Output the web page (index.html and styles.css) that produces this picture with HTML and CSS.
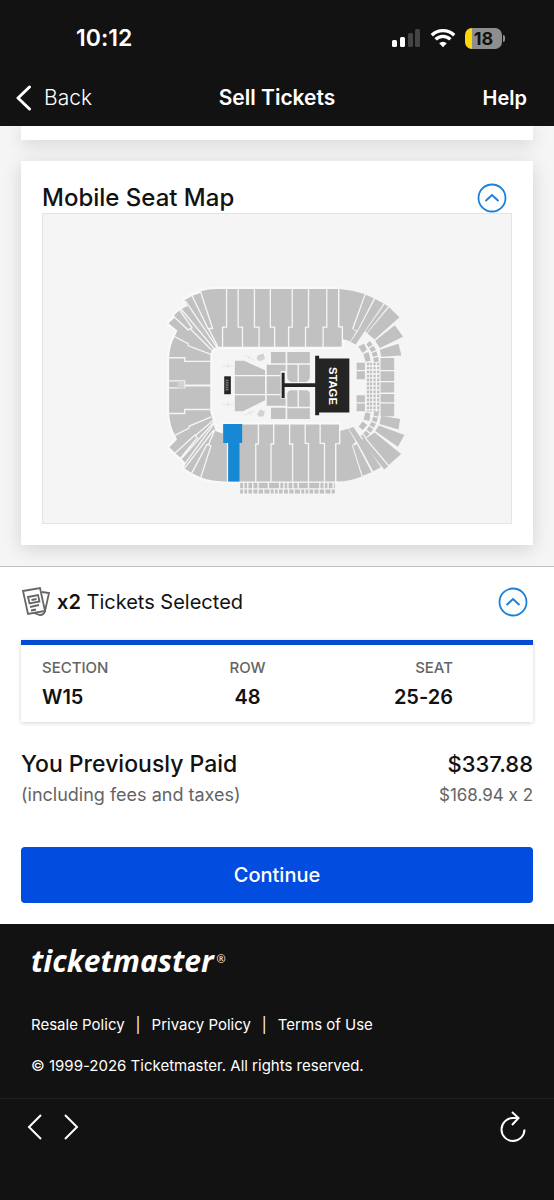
FILE: index.html
```html
<!DOCTYPE html>
<html lang="en">
<head>
    <meta charset="utf-8">
    <meta name="viewport" content="width=device-width, initial-scale=1">
    <title>Sell Tickets</title>
    <link rel="stylesheet" href="styles.css">
</head>
<body>
    <header class="top">
        <div class="status-bar">
            <span class="time">10:12</span>
            <div class="status-icons">
                <svg width="29" height="20" viewBox="0 0 29 20">
                    <rect x="0" y="12" width="5" height="7" rx="1.5" fill="#fff"/>
                    <rect x="8" y="9" width="5" height="10" rx="1.5" fill="#fff"/>
                    <rect x="16" y="5" width="5" height="14" rx="1.5" fill="#444"/>
                    <rect x="23" y="1" width="5" height="18" rx="1.5" fill="#444"/>
                </svg>
                <svg width="26" height="20" viewBox="0 0 26 20" fill="none" stroke="#fff" stroke-width="3.4">
                    <path d="M1.800 7.200a16 16 0 0 1 22.400 0"/>
                    <path d="M5.600 11.400a10.500 10.500 0 0 1 14.800 0"/>
                    <path d="M13 19.200l-3.800-3.900a5.500 5.500 0 0 1 7.600 0z" fill="#fff" stroke="none"/>
                </svg>
                <div class="battery"><span>18</span></div>
            </div>
        </div>
        <nav class="nav-bar">
            <button class="nav-button back">
                <svg width="16" height="26" viewBox="0 0 16 26" fill="none" stroke="#fff" stroke-width="3" stroke-linecap="round" stroke-linejoin="round">
                    <path d="M13.500 2L2 13l11.500 11"/>
                </svg>
                Back
            </button>
            <h1 class="nav-title">Sell Tickets</h1>
            <button class="nav-button help">Help</button>
        </nav>
    </header>

    <main class="content">
        <div class="card card-end"></div>
        <section class="card map-card">
            <div class="map-header">
                <h2>Mobile Seat Map</h2>
                <button class="toggle" aria-label="Collapse seat map">
                    <svg width="30" height="30" viewBox="0 0 30 30" fill="none" stroke="#1a80dc">
                        <circle cx="15" cy="15" r="13.500" stroke-width="1.800"/>
                        <path d="M8.500 18l6.500-6 6.500 6" stroke-width="2"/>
                    </svg>
                </button>
            </div>
            <div class="seat-map">
                <svg viewBox="-324 -186 1410 930">
                    <!-- west side and the two long stands -->
                    <path class="seats halo" d="M565 40H200Q175 40 152 47L150 52 126 60 102 74 112 92 104 94 91 102 73 117 71 128 54 143 81 165 73 183Q58 210 56 245V415Q58 450 73 480L80 493 57 517 75 535 90 548 106 565 101 580 124 594 150 607Q185 620 232 620H556V505H568V448H218V475L195 468Q190 440 180 410V240Q182 216 205 214H576V156H565Z"/>
                    <g class="aisles">
                        <path d="M229 38V155H217V216M264 38V155H277V216M313 38V155H327V216M361 38V155H374V216M427 38V155H416V216M476 38V155H467V216M531 38V155H520V216"/>
                        <path d="M150 46L187 159H173L124 58M175 160L204 216M105 76L200 216M90 98L192 220M70 123L113 163 125 157 88 104M121 161L184 224M72 183L113 205 114 211 182 237M54 247H103V258H182M54 317H103V330H182"/>
                        <path d="M54 415H103V403H182M54 338H103V332H182M73 481L115 460 117 453 183 425M72 536L134 480 141 488 90 550M137 480L190 435M92 552L192 440M104 566L192 445M101 582L191 464M123 597L170 508 182 513 151 609M175 508L193 466"/>
                        <path d="M325 446V507H317V622M371 446V507H363V622M419 446V507H428V622M466 446V505H476V622M511 446V505H524V622M232 500V622"/>
                    </g>
                    <rect class="light-seats" x="82" y="319" width="20" height="20"/>

                    <!-- selected section -->
                    <path class="selected" d="M219 447H276V504H268V620H234V504H219Z"/>

                    <!-- north east corner -->
                    <g class="seats" transform="translate(390 0)">
                        <path d="M179 40Q218 43 255 55L217 160 230 167 212 198Q200 192 190 191V152H179Z"/>
                        <path d="M258 57L283 68 233 165 221 161Z"/>
                        <path d="M287 70L312 84 228 207 213 200 236 165Z"/>
                        <path d="M315 86L326 92 262 172 257 168Z"/>
                        <path d="M329 95L360 125 285 192 263 173Z"/>
                        <path d="M346 149L371 184 301 218 287 196Z"/>
                        <path d="M357 205L366 240 305 244 301 223Z"/>
                        <path d="M303 248H344V284H303ZM303 288H344V317H303ZM303 321H344V352H303Z"/>
                        <path d="M236 213L253 205 262 222 249 233ZM251 236L268 229 273 256 258 259ZM231 262H256V284H231ZM231 288H256V312H231Z"/>
                    </g>
                    <!-- south east corner -->
                    <g class="seats" transform="translate(390 330)">
                        <path d="M170 290V178H182V137Q194 135 205 131L228 170 217 182 246 275Q210 290 170 290Z"/>
                        <path d="M220 182L232 178 276 262 249 273Z"/>
                        <path d="M207 131L221 126 304 247 281 259 236 176Z"/>
                        <path d="M244 166L255 160 326 244 314 254Z"/>
                        <path d="M285 142L365 207 328 240 260 160Z"/>
                        <path d="M298 121L375 150 355 185 287 138Z"/>
                        <path d="M305 92L362 102 357 133 300 117Z"/>
                        <path d="M303 26H344V51H303ZM303 55H344V93H303ZM231 30H256V51H231ZM231 55H256V78H231Z"/>
                        <path d="M257 82L272 84 270 108 252 104ZM249 109L263 120 249 135 237 124Z"/>
                    </g>
                    <g class="rows">
                        <path d="M655 262V410M664 262V410M675 262V410M686 262V410" stroke-width="7" stroke-dasharray="8 4"/>
                        <path d="M655 202Q676 222 681 262M681 410Q676 455 638 488" stroke-width="15" stroke-dasharray="13 4"/>
                        <path d="M653 222Q664 240 667 262M667 410Q664 440 650 462" stroke="#f5f5f5" stroke-width="2"/>
                        <path d="M270 632H555" stroke-width="17" stroke-dasharray="9 4 8 4 11 4 12 4 27 4 30 4"/>
                        <path d="M270 650H555" stroke-width="12" stroke-dasharray="9 4 8 4 11 4 12 4 13 4 15 4"/>
                    </g>

                    <!-- floor -->
                    <g class="seats">
                        <path d="M254 256H282L345 285V375L278 408H254ZM350 268H407V287H392V370H407V392H350Z"/>
                        <path d="M363 230H407V264H363ZM412 230H480V264H412ZM363 398H407V432H363ZM412 399H480V432H412Z"/>
                        <path d="M412 268H443V320H424Q412 316 412 304ZM447 268H480V304Q480 316 468 320H447ZM443 395H412V357Q412 346 424 345H443ZM447 395H480V357Q480 346 468 345H447Z"/>
                    </g>
                    <path class="aisles" d="M250 301H392M250 358H392"/>
                    <g class="light-seats">
                        <path d="M322 240L340 234 345 250 330 258 320 252ZM322 414L332 403 345 410 340 424 324 424Z"/>
                        <path d="M215 272H250M233 264V280M282 239L314 254M300 239L294 252M215 388H250M233 380V396M282 420L314 408M296 408L302 421" stroke="#ddd" stroke-width="2"/>
                    </g>

                    <!-- stage -->
                    <path class="stage" d="M496 241H508V249H599V412H508V420H496V335H404V368H395V292H404V324H496Z"/>
                    <rect class="stage" x="222" y="303" width="20" height="54"/>
                    <path d="M228 313V348M233 313V348" stroke="#999" stroke-width="3" stroke-dasharray="5 2"/>
                    <text class="stage-label" x="332" y="-537" transform="rotate(90)" text-anchor="middle">STAGE</text>
                </svg>
            </div>
        </section>
    </main>

    <section class="sheet">
        <div class="sheet-header">
            <svg width="30" height="32" viewBox="0 0 30 32" fill="none" stroke="#666" stroke-width="1.800">
                <path d="M2 5L19 2l5 23-17 3z"/>
                <path d="M21 6l7 1-4 18q-1 4-5 4l-6-2"/>
                <path d="M7 11l10-2 1.500 6.500-10 2zM10.500 14l5-1M9 21l9-2M10 24.500l5-1"/>
            </svg>
            <p><strong>x2</strong> Tickets Selected</p>
            <button class="toggle" aria-label="Collapse selected tickets">
                <svg width="30" height="30" viewBox="0 0 30 30" fill="none" stroke="#1a80dc">
                    <circle cx="15" cy="15" r="13.500" stroke-width="1.800"/>
                    <path d="M8.500 18l6.500-6 6.500 6" stroke-width="2"/>
                </svg>
            </button>
        </div>

        <div class="ticket">
            <table>
                <thead>
                    <tr><th>SECTION</th><th>ROW</th><th>SEAT</th></tr>
                </thead>
                <tbody>
                    <tr><td>W15</td><td>48</td><td>25-26</td></tr>
                </tbody>
            </table>
        </div>

        <div class="paid">
            <div class="paid-total"><span>You Previously Paid</span><span class="total">$337.88</span></div>
            <div class="paid-detail"><span>(including fees and taxes)</span><span class="each">$168.94 x 2</span></div>
        </div>

        <button class="continue">Continue</button>
    </section>

    <footer class="footer">
        <div class="logo">ticketmaster<span>®</span></div>
        <div class="links">
            <a href="#">Resale Policy</a>
            <span>|</span>
            <a href="#">Privacy Policy</a>
            <span>|</span>
            <a href="#">Terms of Use</a>
        </div>
        <p class="copyright">© 1999-2026 Ticketmaster. All rights reserved.</p>
    </footer>

    <div class="browser-bar">
        <button aria-label="Previous page">
            <svg width="16" height="28" viewBox="0 0 16 28" fill="none" stroke="#fff" stroke-width="2"><path d="M14 2L2 14l12 12"/></svg>
        </button>
        <button aria-label="Next page">
            <svg width="16" height="28" viewBox="0 0 16 28" fill="none" stroke="#fff" stroke-width="2"><path d="M2 2l12 12L2 26"/></svg>
        </button>
        <button class="reload" aria-label="Reload">
            <svg width="26" height="34" viewBox="0 0 26 34" fill="none" stroke="#fff" stroke-width="2">
                <path d="M24.500 19.500A11.500 11.500 0 1 1 13 8H18.500"/>
                <path d="M12 2l6.500 6L12 15"/>
            </svg>
        </button>
    </div>
</body>
</html>
```
FILE: styles.css
```css
* {
    box-sizing: border-box;
}

body {
    margin: 0;
    min-height: 100vh;
    display: flex;
    flex-direction: column;
    background-color: #121212;
    font-family: Inter, "Liberation Sans", sans-serif;
    font-feature-settings: "calt" 0;
    color: #121212;
}

h1, h2, p {
    margin: 0;
}

button {
    padding: 0;
    border: none;
    background: none;
    color: inherit;
    font-family: inherit;
    cursor: pointer;
}

svg {
    display: block;
}

/* top bars */
.top {
    color: #ffffff;
}

.status-bar {
    display: flex;
    justify-content: space-between;
    align-items: center;
    height: 76px;
    padding: 0 52px 0 76px;
}

.time {
    font-size: 23px;
    font-weight: 600;
}

.status-icons {
    display: flex;
    align-items: center;
    gap: 9px;
}

.battery {
    position: relative;
    width: 37px;
    height: 21px;
    border-radius: 7px;
    background: linear-gradient(to right, #ffd60a 7px, #8e8e8e 7px);
    color: #121212;
    font-size: 18px;
    font-weight: 700;
    line-height: 21px;
    text-align: center;
}

.battery::after {
    content: "";
    position: absolute;
    right: -3px;
    top: 7px;
    width: 2px;
    height: 7px;
    border-radius: 0 2px 2px 0;
    background-color: #8e8e8e;
}

.nav-bar {
    display: grid;
    grid-template-columns: 1fr auto 1fr;
    align-items: center;
    height: 50px;
    padding: 0 27px 6px 16px;
}

.nav-button {
    font-size: 20px;
    line-height: 26px;
}

.back {
    display: flex;
    align-items: center;
    gap: 12px;
    font-size: 21px;
    font-weight: 300;
}

.help {
    justify-self: end;
    font-weight: 600;
}

.nav-title {
    padding-left: 11px;
    font-size: 21px;
    font-weight: 600;
    line-height: 26px;
}

/* seat map */
.content {
    padding: 0 21px 21px;
    background-color: #f5f5f5;
    overflow: hidden;
}

.card {
    background-color: #ffffff;
    box-shadow: 0 4px 18px rgba(0, 0, 0, 0.14);
}

.card-end {
    height: 14px;
    margin-bottom: 21px;
}

.map-card {
    padding: 22px 21px 21px;
}

.map-header {
    display: flex;
    justify-content: space-between;
    align-items: center;
    height: 30px;
    padding-right: 5px;
}

.map-header h2 {
    font-size: 24px;
    font-weight: 500;
    line-height: 28px;
}

.seat-map {
    border: 1px solid #e4e4e4;
    background-color: #f5f5f5;
}

.seats {
    fill: #c1c1c1;
}

.halo {
    stroke: #f9f9f9;
    stroke-width: 14;
    paint-order: stroke;
}

.aisles {
    fill: none;
    stroke: #f5f5f5;
    stroke-width: 4;
}

.light-seats {
    fill: #d2d2d2;
}

.rows {
    fill: none;
    stroke: #c1c1c1;
}

.selected {
    fill: #1688d4;
}

.stage {
    fill: #242424;
}

.stage-label {
    fill: #ffffff;
    font-family: "Liberation Sans", sans-serif;
    font-size: 34px;
    font-weight: 700;
}

/* selected tickets */
.sheet {
    padding: 18px 21px 21px;
    border-top: 1px solid #bfbfbf;
    background-color: #ffffff;
}

.sheet-header {
    display: flex;
    align-items: center;
    gap: 6px;
    height: 34px;
    padding-right: 5px;
    font-size: 20px;
}

.sheet-header p {
    flex: 1;
}

.sheet-header strong {
    font-weight: 600;
}

.ticket {
    margin-top: 21px;
    padding: 12px 80px 11px 21px;
    border-top: 5px solid #044bd4;
    box-shadow: 0 1px 4px rgba(0, 0, 0, 0.18);
}

.ticket table {
    width: 100%;
    table-layout: fixed;
    border-collapse: collapse;
}

.ticket th,
.ticket td {
    padding: 0;
    text-align: center;
}

.ticket th {
    color: #646464;
    font-size: 15px;
    font-weight: 500;
    line-height: 22px;
}

.ticket td {
    padding-top: 4px;
    font-size: 20px;
    font-weight: 600;
    line-height: 28px;
}

.ticket th:first-child,
.ticket td:first-child {
    text-align: left;
}

.ticket th:last-child,
.ticket td:last-child {
    text-align: right;
}

.paid {
    margin: 25px 0 38px;
}

.paid-total,
.paid-detail {
    display: flex;
    justify-content: space-between;
}

.paid-total {
    font-size: 23px;
    font-weight: 500;
    line-height: 34px;
}

.total {
    font-size: 22px;
}

.paid-detail {
    color: #646464;
    font-size: 18px;
    line-height: 28px;
}

.each {
    font-size: 17px;
}

.continue {
    display: block;
    width: 100%;
    height: 56px;
    border-radius: 4px;
    background-color: #024ddf;
    color: #ffffff;
    font-size: 20px;
    font-weight: 500;
}

/* footer */
.footer {
    padding: 16px 31px 20px;
    border-bottom: 1px solid #202020;
    color: #ffffff;
    font-size: 15px;
    line-height: 24px;
}

.logo {
    display: flex;
    font-family: "Open Sans", sans-serif;
    font-size: 30px;
    font-style: italic;
    font-weight: 700;
    line-height: 42px;
}

.logo span {
    margin-left: 3px;
    font-size: 11px;
    font-style: normal;
    font-weight: 400;
    line-height: 38px;
}

.links {
    display: flex;
    gap: 11px;
    margin-top: 31px;
}

.links a {
    color: inherit;
    text-decoration: none;
}

.copyright {
    margin-top: 17px;
}

.browser-bar {
    display: flex;
    align-items: center;
    gap: 20px;
    height: 56px;
    padding: 0 28px 0 27px;
}

.reload {
    margin-left: auto;
}
```
